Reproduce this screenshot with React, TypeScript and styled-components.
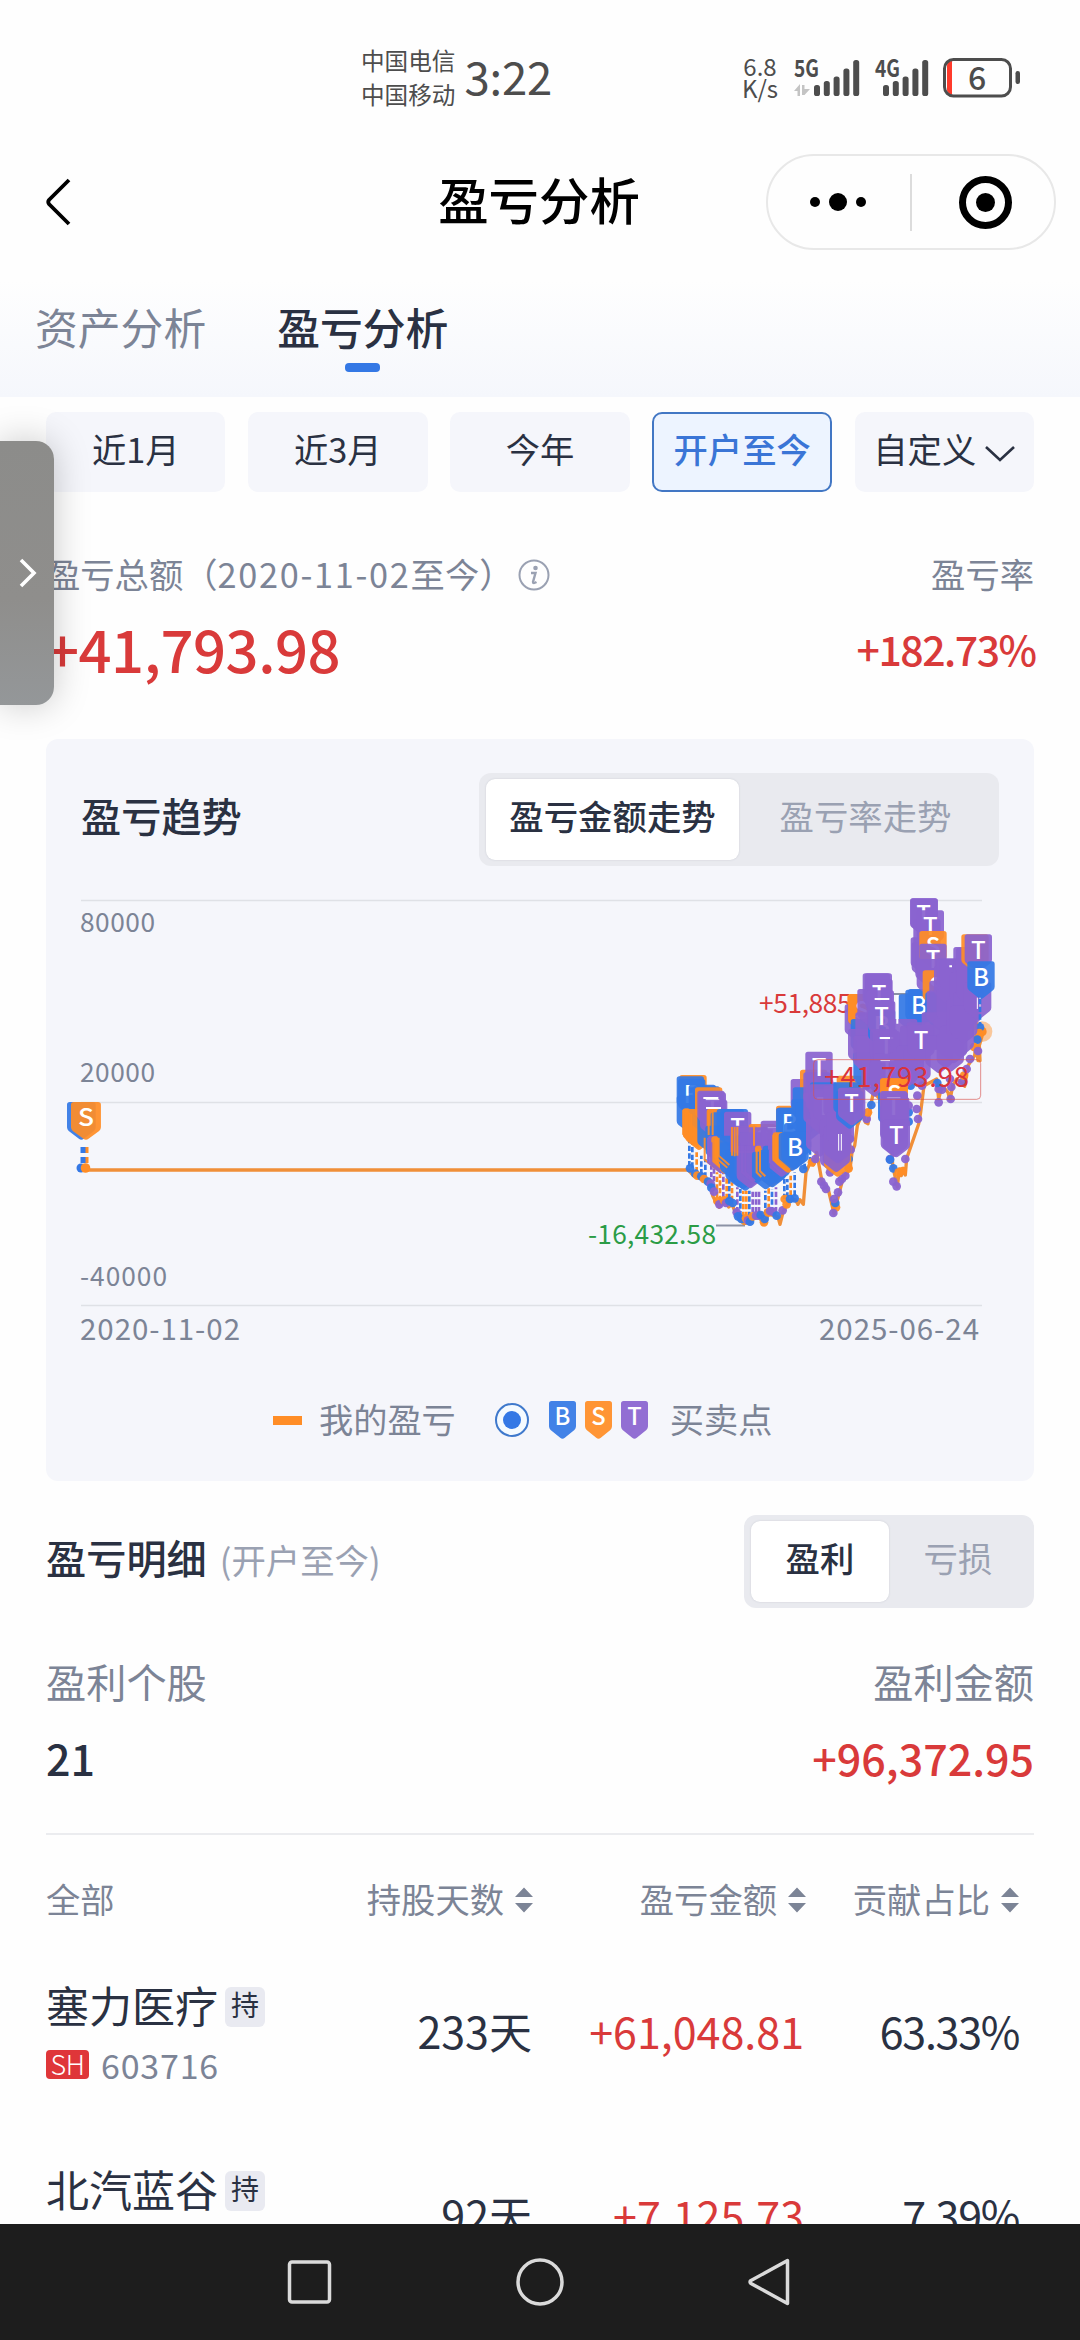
import React from 'react';
import styled, { createGlobalStyle } from 'styled-components';

const FONT = '"Noto Sans CJK SC", "Noto Sans", sans-serif';
const INK = '#2a3142';
const MUTED = '#7c8496';
const FAINT = '#9aa1b2';
const RED = '#d93a3a';
const BLUE = '#3478e5';
const ORANGE = '#ff8d26';
const PURPLE = '#8a63d0';

const Global = createGlobalStyle`
  html, body { margin: 0; padding: 0; background: #fefefe; }
  * { box-sizing: border-box; }
  body { font-family: ${FONT}; color: ${INK}; }
`;

const Screen = styled.div`
  position: relative;
  width: 1080px;
  height: 2340px;
  overflow: hidden;
  display: flex;
  flex-direction: column;
  background: #fefefe;
`;

/* ---------- status bar ---------- */
const StatusBar = styled.div`
  height: 140px;
  flex: none;
  display: flex;
  justify-content: space-between;
  padding: 43px 60px 0 361px;
  color: #4d4d4d;
`;
const StatusLeft = styled.div`
  display: flex;
  gap: 9px;
`;
const Carriers = styled.div`
  font-size: 23.6px;
  line-height: 34px;
  white-space: nowrap;
`;
const Clock = styled.div`
  font-size: 45.5px;
  line-height: 65px;
  letter-spacing: -0.2px;
`;
const StatusRight = styled.div`
  display: flex;
  align-items: flex-start;
  padding-top: 15px;
`;
const Speed = styled.div`
  width: 38px;
  margin-top: -3px;
  margin-right: 15px;
  font-size: 24px;
  line-height: 22px;
  text-align: center;
`;
const StatusIcon = styled.svg`
  overflow: visible;
`;

/* ---------- title bar ---------- */
const TitleBar = styled.div`
  height: 140px;
  flex: none;
  display: grid;
  grid-template-columns: 314px 1fr 314px;
  padding: 0 24px 16px 0;
  align-items: center;
`;
const BackCell = styled.div`
  padding-left: 44px;
  display: flex;
`;
const PageTitle = styled.h1`
  margin: -6px 0 0;
  padding-left: 22px;
  text-align: center;
  font-size: 50.4px;
  line-height: 60px;
  font-weight: 500;
  color: #000;
  white-space: nowrap;
`;
const Capsule = styled.div`
  width: 290px;
  height: 96px;
  justify-self: end;
  border: 2px solid #e8e8e8;
  border-radius: 48px;
  display: flex;
  align-items: center;
`;

/* ---------- tabs ---------- */
const Tabs = styled.div`
  height: 117px;
  flex: none;
  display: flex;
  gap: 71px;
  padding: 15px 35px 0;
  background: linear-gradient(#fefefe, #f5f7fc);
`;
const Tab = styled.div<{ $on?: boolean }>`
  display: flex;
  flex-direction: column;
  align-items: center;
  gap: 6px;
  font-size: 42.8px;
  line-height: 62px;
  font-weight: ${p => (p.$on ? 500 : 400)};
  color: ${p => (p.$on ? INK : MUTED)};
  &::after {
    content: '';
    width: 35px;
    height: 9px;
    border-radius: 4px;
    background: ${p => (p.$on ? BLUE : 'transparent')};
  }
`;

/* ---------- page body ---------- */
const Body = styled.main`
  flex: 1;
  min-height: 0;
  overflow: hidden;
  padding: 15px 46px 0;
`;
const Chips = styled.div`
  display: grid;
  grid-template-columns: repeat(5, 1fr);
  gap: 22.7px;
`;
const Chip = styled.div<{ $on?: boolean }>`
  height: 80px;
  border-radius: 10px;
  border: 2px solid ${p => (p.$on ? '#4277c4' : '#f5f6fb')};
  background: ${p => (p.$on ? '#edf4ff' : '#f5f6fb')};
  color: ${p => (p.$on ? '#3a75d6' : INK)};
  font-size: 34.3px;
  line-height: 69px;
  font-weight: ${p => (p.$on ? 500 : 400)};
  display: flex;
  justify-content: center;
  white-space: nowrap;
`;
const ChipArrow = styled.svg`
  margin: 31px 0 0 9px;
`;
const SpreadRow = styled.div<{ $h: number; $top?: number }>`
  height: ${p => p.$h}px;
  margin-top: ${p => p.$top ?? 0}px;
  display: flex;
  justify-content: space-between;
  align-items: center;
`;
const Label = styled.div<{ $size: number }>`
  display: flex;
  align-items: center;
  font-size: ${p => p.$size}px;
  color: ${MUTED};
  white-space: nowrap;
`;
const DateText = styled.span`
  letter-spacing: 1.7px;
`;
const InfoIcon = styled.svg`
  margin: 3px 0 0 4px;
`;
const Figure = styled.div<{ $size: number; $ls?: number; $ink?: boolean }>`
  font-size: ${p => p.$size}px;
  line-height: 1;
  letter-spacing: ${p => p.$ls ?? 0}px;
  margin-right: ${p => p.$ls ?? 0}px;
  font-weight: 500;
  color: ${p => (p.$ink ? INK : RED)};
`;

/* ---------- trend card ---------- */
const Card = styled.section`
  width: 988px;
  height: 742px;
  margin-top: 51px;
  padding-top: 34px;
  border-radius: 12px;
  background: #f5f6fb;
`;
const CardHead = styled.div`
  display: flex;
  justify-content: space-between;
  padding: 0 35px;
`;
const SectionTitle = styled.h2`
  margin: 0;
  font-size: 40.2px;
  line-height: 84px;
  font-weight: 500;
  white-space: nowrap;
`;
const Segmented = styled.div`
  display: flex;
  height: 93px;
  padding: 6px 7px;
  border-radius: 12px;
  background: #e9eaef;
`;
const Segment = styled.div<{ $on?: boolean; $w: number }>`
  width: ${p => p.$w}px;
  border-radius: 9px;
  text-align: center;
  font-size: 34.4px;
  line-height: 72px;
  font-weight: ${p => (p.$on ? 500 : 400)};
  color: ${p => (p.$on ? INK : FAINT)};
  background: ${p => (p.$on ? '#fff' : 'transparent')};
  box-shadow: ${p => (p.$on ? '0 0 2px #c8cad2' : 'none')};
`;
const Plot = styled.svg`
  display: block;
  margin-top: 23px;
  overflow: visible;
`;
const Legend = styled.div`
  height: 122px;
  padding-left: 227px;
  display: flex;
  align-items: center;
  font-size: 34.2px;
  color: ${MUTED};
`;
const LegendDash = styled.i`
  width: 29px;
  height: 9px;
  margin-right: 17px;
  background: ${ORANGE};
`;
const LegendText = styled.span<{ $left?: number }>`
  line-height: 44px;
  margin: 0 0 5px ${p => p.$left ?? 0}px;
`;
const Radio = styled.i`
  width: 34px;
  height: 34px;
  margin: 0 20px 0 39px;
  border-radius: 50%;
  border: 2px solid #3f79cc;
  background: #f4faff;
  display: grid;
  place-items: center;
  &::after {
    content: '';
    width: 18px;
    height: 18px;
    border-radius: 50%;
    background: ${BLUE};
  }
`;
const LegendBadge = styled.svg`
  margin-right: 9px;
`;

/* ---------- details ---------- */
const SubTitle = styled.span`
  margin-left: 13px;
  font-size: 34.4px;
  font-weight: 400;
  color: ${FAINT};
`;
const DetailHead = styled(SpreadRow)`
  align-items: flex-start;
`;
const Rule = styled.hr`
  height: 2px;
  margin: 0;
  border: 0;
  background: #ebecef;
`;
const TableRow = styled.div<{ $h: number; $top?: number }>`
  height: ${p => p.$h}px;
  padding-top: ${p => p.$top ?? 0}px;
  display: grid;
  grid-template-columns: 250px 237px 273px 213px;
  align-items: center;
`;
const HeadCell = styled.div<{ $right?: boolean }>`
  display: flex;
  align-items: center;
  justify-content: ${p => (p.$right ? 'flex-end' : 'flex-start')};
  gap: 11px;
  font-size: 34.3px;
  line-height: 44px;
  color: ${MUTED};
  white-space: nowrap;
`;
const SortIcon = styled.svg`
  margin-top: 5px;
`;
const StockCell = styled.div`
  display: flex;
  flex-direction: column;
  gap: 8px;
`;
const StockName = styled.div`
  display: flex;
  align-items: center;
  gap: 7px;
  font-size: 43px;
  line-height: 62px;
  white-space: nowrap;
`;
const HoldTag = styled.span`
  width: 40px;
  height: 40px;
  margin-top: 5px;
  border-radius: 6px;
  background: #e9eaf1;
  font-size: 28px;
  line-height: 35px;
  text-align: center;
`;
const StockCode = styled.div`
  display: flex;
  align-items: center;
  gap: 12px;
  font-size: 34px;
  line-height: 44px;
  letter-spacing: 0.8px;
  color: ${MUTED};
`;
const Market = styled.span`
  width: 43px;
  height: 29px;
  margin-bottom: 2px;
  border-radius: 4px;
  background: #df3639;
  color: #fff;
  font: 300 27px/28px ${FONT};
  letter-spacing: -0.5px;
  text-align: center;
`;
const Value = styled.div<{ $red?: boolean; $pad?: number; $ls?: number }>`
  padding-right: ${p => p.$pad ?? 0}px;
  text-align: right;
  font-size: 43px;
  line-height: 62px;
  letter-spacing: ${p => p.$ls ?? 0}px;
  color: ${p => (p.$red ? RED : INK)};
  white-space: nowrap;
`;

/* ---------- system chrome ---------- */
const SystemNav = styled.nav`
  height: 116px;
  flex: none;
  display: flex;
  justify-content: center;
  align-items: center;
  gap: 180px;
  background: #1d1d1d;
`;
const SideHandle = styled.div`
  position: absolute;
  left: 0;
  top: 441px;
  width: 54px;
  height: 264px;
  padding-left: 18px;
  border-radius: 0 18px 18px 0;
  background: linear-gradient(#8c8c8a, #8f8e8c 60%, #949799);
  box-shadow: 0 0 36px rgba(0, 0, 0, 0.22);
  display: flex;
  align-items: center;
`;

/* ---------- badges ---------- */
type Kind = 'B' | 'S' | 'T' | 'b' | 's' | 't';
const COLORS: Record<string, string> = { B: BLUE, S: ORANGE, T: PURPLE };
const colorOf = (k: Kind) => COLORS[k.toUpperCase()];

/* Upper case draws the letter, lower case leaves the badge blank. */
const Badge = ({ k, x, y }: { k: Kind; x: number; y: number }) => (
  <g transform={`translate(${x} ${y})`}>
    <path
      d="M8 0H74Q82 0 82 8V76Q82 82 77 87L48 110Q41 116 34 110L5 87Q0 82 0 76V8Q0 0 8 0Z"
      fill={colorOf(k)}
      fillOpacity={0.93}
    />
    {k === k.toUpperCase() && (
      <text x={41} y={73} fontSize={72} fontWeight={500} textAnchor="middle" fill="#fff">
        {k}
      </text>
    )}
  </g>
);

const EARLY_BADGES: [Kind, number, number][] = [
  ['s', 118, 588], ['b', 110, 592], ['B', 114, 600], ['b', 110, 650],
  ['s', 128, 688], ['s', 136, 700], ['b', 146, 617], ['b', 158, 622], ['b', 150, 650],
  ['s', 128, 690], ['b', 172, 710],
  ['s', 165, 625], ['t', 172, 635], ['T', 176, 640], ['t', 180, 662],
  ['s', 200, 690], ['b', 212, 700], ['b', 196, 740], ['t', 204, 770], ['s', 214, 772],
  ['s', 226, 775], ['b', 230, 690], ['b', 242, 690], ['T', 252, 698], ['b', 236, 770],
  ['b', 240, 790], ['b', 256, 812], ['t', 270, 740], ['b', 268, 818],
  ['b', 296, 760], ['S', 326, 735], ['t', 296, 745], ['t', 300, 760], ['t', 284, 800],
  ['b', 275, 822], ['t', 290, 815], ['s', 345, 800], ['s', 352, 810], ['T', 362, 725],
  ['t', 366, 745], ['b', 336, 818], ['b', 356, 812], ['b', 368, 800], ['s', 408, 680],
  ['b', 412, 686], ['B', 408, 686], ['t', 384, 780], ['s', 398, 760],
  ['s', 404, 768], ['s', 412, 762], ['b', 416, 762], ['t', 452, 600], ['s', 480, 572],
  ['b', 458, 625], ['b', 454, 660], ['b', 468, 670], ['b', 432, 732], ['B', 424, 758],
];

const LATE_BADGES: [Kind, number, number][] = [
  ['t', 490, 580], ['t', 498, 600], ['T', 496, 518], ['t', 490, 640], ['t', 498, 720],
  ['t', 512, 660], ['t', 540, 690], ['t', 520, 640], ['b', 510, 610], ['t', 506, 616],
  ['T', 510, 636], ['t', 520, 630], ['t', 540, 720], ['t', 540, 770], ['t', 550, 620], ['s', 590, 590],
  ['b', 580, 610], ['s', 552, 780], ['t', 548, 766], ['t', 552, 740], ['t', 560, 700],
  ['b', 588, 636], ['T', 594, 626],
  ['s', 622, 346], ['S', 626, 346], ['t', 614, 376], ['s', 624, 346], ['S', 626, 346], ['b', 632, 420], ['t', 624, 450],
  ['t', 646, 400], ['t', 652, 330], ['t', 668, 283], ['t', 674, 283], ['T', 676, 300],
  ['b', 640, 520], ['t', 640, 470], ['t', 650, 480], ['t', 664, 540], ['t', 680, 334],
  ['B', 684, 392], ['T', 684, 366], ['t', 690, 450], ['t', 700, 500], ['t', 690, 540],
  ['T', 698, 456], ['t', 702, 480], ['T', 700, 524], ['t', 690, 545],
  ['b', 776, 346], ['b', 804, 330], ['B', 796, 332], ['t', 750, 420], ['t', 780, 440],
  ['t', 800, 430], ['t', 770, 500], ['t', 750, 520], ['t', 790, 510],
  ['t', 812, 175], ['t', 812, 58], ['T', 810, 58], ['t', 820, 120], ['t', 815, 190],
  ['T', 830, 94], ['t', 826, 210], ['S', 838, 156], ['T', 838, 194], ['t', 830, 240],
  ['S', 848, 274], ['t', 868, 305], ['b', 856, 340], ['t', 860, 335], ['t', 845, 400],
  ['T', 802, 438], ['t', 882, 260], ['t', 890, 238], ['t', 900, 240], ['t', 890, 330],
  ['t', 880, 420], ['t', 856, 470], ['t', 900, 440], ['t', 940, 204], ['t', 948, 206],
  ['t', 930, 280], ['t', 920, 360], ['t', 940, 340], ['t', 920, 420], ['t', 890, 465],
  ['s', 964, 166], ['T', 974, 166], ['t', 950, 270], ['t', 930, 380], ['t', 972, 310],
  ['b', 714, 640], ['s', 720, 598], ['S', 722, 598], ['t', 722, 640], ['t', 720, 690],
  ['T', 720, 636], ['t', 726, 655], ['t', 722, 720], ['T', 728, 722], ['B', 982, 247],
];

/* Edges of older badges that still show between the newer ones on top. */
const EDGES: [Kind, string][] = [
  ['s', 'M130 692V765L165 798M142 692V770L176 806M154 704V775'],
  ['s', 'M206 692V768M218 692V768M194 776V842L236 876'],
  ['t', 'M204 776V850L244 882M214 790V850L240 872'],
  ['s', 'M226 776V835L262 866M236 776V830L268 858'],
  ['s', 'M276 744V830M284 744V832M292 744V830'],
  ['t', 'M306 790V880L340 910M316 800V880L345 906'],
  ['s', 'M350 806V880L364 894M342 740V800M360 812V876L376 892'],
  ['b', 'M386 812V870L408 890'],
  ['t', 'M390 812V850L425 882'],
  ['s', 'M400 768V842L440 876M410 764V838L450 872'],
];

const DOTS: [Kind, number, number][] = [
  ['b', 150, 868], ['b', 166, 884], ['s', 172, 890], ['b', 184, 892], ['s', 192, 900], ['b', 204, 908],
  ['t', 212, 914], ['b', 214, 926], ['t', 222, 938], ['s', 232, 966], ['t', 238, 976], ['s', 252, 964],
  ['t', 258, 972], ['b', 268, 966], ['b', 278, 972], ['t', 290, 1000], ['b', 294, 1012], ['b', 304, 1020],
  ['s', 318, 1018], ['t', 324, 1024], ['b', 330, 1028], ['s', 338, 1012], ['t', 348, 1010], ['t', 356, 1010],
  ['b', 362, 1008], ['s', 372, 1030], ['b', 374, 1020],
  ['s', 384, 1000], ['t', 390, 996], ['t', 398, 998], ['b', 410, 1010], ['t', 428, 994], ['s', 440, 976],
  ['s', 434, 960], ['b', 450, 960], ['b', 464, 958], ['b', 490, 870], ['s', 516, 850], ['t', 526, 840],
  ['t', 544, 908], ['t', 552, 920], ['t', 558, 930], ['t', 570, 880], ['t', 598, 908], ['t', 594, 940],
  ['s', 588, 985], ['b', 586, 972], ['t', 582, 960],
  ['t', 580, 1002], ['t', 606, 900], ['t', 616, 890], ['s', 626, 868], ['b', 626, 840], ['t', 632, 812],
  ['t', 630, 780], ['t', 680, 720], ['s', 684, 700], ['b', 694, 678], ['t', 750, 840], ['b', 750, 842], ['b', 760, 868],
  ['s', 776, 880], ['s', 788, 876], ['t', 796, 840], ['t', 760, 908], ['t', 770, 922], ['b', 806, 700],
  ['t', 806, 680], ['b', 806, 728], ['t', 834, 720], ['t', 830, 690], ['t', 846, 620], ['t', 832, 650],
  ['b', 812, 620], ['t', 896, 670], ['t', 932, 660], ['t', 906, 632], ['t', 896, 630], ['b', 892, 612],
  ['t', 934, 624], ['t', 930, 600], ['t', 966, 610], ['s', 972, 590], ['t', 980, 570], ['t', 990, 540],
  ['s', 1004, 440], ['b', 1020, 445], ['s', 1012, 478], ['s', 1018, 462],
  ['b', 1012, 482], ['s', 1002, 504], ['t', 1014, 516],
];

const LINE =
  'M-1665 873H145L160 890 185 898 200 912 212 918 218 950 226 966 238 985 246 970 254 962 266 984 276 976 286 1000 294 1018 312 1034 330 1030 345 1014 358 1014 370 1036 386 1006 404 1010 414 1014 420 1036 430 996 448 965 466 962 474 976 480 962 490 976 498 880 512 848 520 858 530 820 546 908 566 936 582 1004 598 940 610 895 620 882 630 872 636 820 644 800 652 740 668 700 676 730 684 734 690 690 700 640 750 690 758 860 772 924 778 870 784 890 790 868 796 888 800 838 836 735 842 700 852 620 890 600 896 660 906 620 924 640 930 664 938 620 950 600 966 612 974 622 984 560 1004 530 1008 490 1014 545 1020 545 1018 500 1030 458';

const DASHES: [Kind, number, number, number][] = [
  ['b', 148, 780, 862], ['b', 157, 790, 866], ['s', 170, 820, 880], ['b', 184, 830, 886], ['b', 196, 840, 896],
  ['t', 214, 860, 918], ['t', 222, 865, 930], ['s', 231, 880, 955], ['s', 240, 886, 966], ['t', 250, 880, 955],
  ['s', 260, 892, 960], ['b', 268, 900, 960], ['s', 276, 910, 966], ['t', 292, 925, 1000], ['b', 301, 930, 1012],
  ['s', 310, 935, 1014], ['s', 319, 935, 1014], ['b', 328, 935, 1014], ['t', 338, 935, 1000], ['t', 348, 935, 1000], ['t', 357, 935, 1000],
  ['b', 376, 935, 1010], ['s', 386, 925, 990], ['b', 396, 930, 1000], ['t', 408, 925, 1000],
  ['b', 433, 900, 960], ['b', 442, 900, 956], ['s', 452, 890, 950], ['b', 464, 880, 950], ['b', 494, 850, 870], ['b', 510, 760, 850],
];

const AXIS = { fontSize: 26.3, fill: MUTED };

const TrendPlot = () => (
  <Plot width={988} height={470} viewBox="46 890 988 470" fontFamily={FONT}>
    {[901, 1103, 1306].map(y => (
      <path key={y} d={`M81 ${y + 0.5}H982`} stroke="#dfe1e6" strokeWidth={1.6} />
    ))}
    <text x={80} y={933} {...AXIS} textLength={75}>80000</text>
    <text x={80} y={1083} {...AXIS} textLength={75}>20000</text>
    <text x={80} y={1287} {...AXIS} textLength={87}>-40000</text>
    <text x={80} y={1341} fontSize={29.5} fill={MUTED} textLength={160}>2020-11-02</text>
    <text x={819} y={1341} fontSize={29.5} fill={MUTED} textLength={160}>2025-06-24</text>
    <text x={588} y={1244.5} fontSize={26.3} fill="#2b9c46" textLength={128}>-16,432.58</text>
    <path d="M716 1226.5H745M893 995H912" stroke="#8b92a5" strokeWidth={2} />
    <text x={759} y={1014} fontSize={26.3} fill={RED} textLength={128}>+51,885.31</text>
    <g transform="translate(640 880) scale(.33333)">
      <path d={LINE} fill="none" stroke="#f08f38" strokeWidth={10} strokeLinejoin="round" />
      <circle cx={1026} cy={458} r={31} fill={ORANGE} fillOpacity={0.45} />
      <circle cx={1026} cy={458} r={14} fill={ORANGE} />
      {DASHES.map(([k, x, y1, y2], i) => (
        <path key={i} d={`M${x} ${y2}V${y1}`} stroke={colorOf(k)} strokeWidth={8} strokeDasharray="16 7" />
      ))}
      {DOTS.map(([k, x, y], i) => (
        <circle key={i} cx={x} cy={y} r={13} fill={colorOf(k)} fillOpacity={0.95} />
      ))}
      {EARLY_BADGES.slice(0, -1).map(([k, x, y], i) => <Badge key={i} k={k} x={x} y={y} />)}
      {EDGES.map(([k, d], i) => (
        <path key={i} d={d} fill="none" stroke={colorOf(k)} strokeWidth={6} strokeOpacity={0.9} />
      ))}
      <path d="M190 657H235M198 687H243" stroke="#fff" strokeWidth={6} />
      {EARLY_BADGES.slice(-1).map(([k, x, y], i) => <Badge key={i} k={k} x={x} y={y} />)}
      {LATE_BADGES.map(([k, x, y], i) => <Badge key={i} k={k} x={x} y={y} />)}
      <path d="M704 360H748M928 262H936M772 348V434" stroke="#fff" strokeWidth={6} />
      <path d="M1012 356V390M1020 356V390M596 765V815M604 765V815" stroke="#fff" strokeWidth={3} />
      <path d="M1020 360V440" stroke={BLUE} strokeWidth={8} strokeDasharray="16 7" />
      <rect x={521} y={542} width={501} height={119} rx={12} fill="none" stroke="#d9534f" strokeOpacity={0.65} strokeWidth={3} />
      <text x={553} y={625} fontSize={82} fill="#d9323c" textLength={434}>+41,793.98</text>
    </g>
    <path d="M82 1148V1169M85 1148V1169" stroke={BLUE} strokeWidth={3} strokeDasharray="6 4" />
    <path d="M87 1148V1169" stroke={ORANGE} strokeWidth={3} strokeDasharray="6 4" />
    <circle cx={81} cy={1169} r={4.5} fill={BLUE} />
    <circle cx={85.5} cy={1169} r={4.8} fill={ORANGE} />
    <g transform="translate(67 1103) scale(.35 .333)"><Badge k="b" x={0} y={0} /></g>
    <g transform="translate(71 1103) scale(.365 .333)"><Badge k="S" x={0} y={0} /></g>
  </Plot>
);

const BARS = [11, 15, 19.5, 27.5, 36];
const Signal = ({ label, x, w, data }: { label: string; x: number; w: number; data?: boolean }) => (
  <StatusIcon width={w} height={44} viewBox={`0 0 ${w} 44`}>
    <text x={0} y={19} fontSize={23.5} fontWeight={700} fill="#4d4d4d" fontFamily={FONT} textLength={25} lengthAdjust="spacingAndGlyphs">{label}</text>
    {BARS.map((h, i) => (
      <rect key={h} x={x + i * 9.8} y={38 - h} width={6} height={h} rx={2.6} fill="#4d4d4d" />
    ))}
    {data && <path d="M0 33L6 26V38H3.5V33ZM8 27H10.5V31H16L10.5 37H8Z" fill="#c4c4c4" />}
  </StatusIcon>
);

const Sort = () => (
  <SortIcon width={18} height={26} viewBox="0 0 18 26" fill={MUTED}>
    <path d="M9 .5L18 10H0ZM9 25.5L18 16H0Z" />
  </SortIcon>
);

const STOCKS = [
  { name: '塞力医疗', market: 'SH', code: '603716', days: '233天', gain: '+61,048.81', share: '63.33%' },
  { name: '北汽蓝谷', market: 'SH', code: '600733', days: '92天', gain: '+7,125.73', share: '7.39%' },
];

export default function App() {
  return (
    <Screen>
      <Global />
      <StatusBar>
        <StatusLeft>
          <Carriers>中国电信<br />中国移动</Carriers>
          <Clock>3:22</Clock>
        </StatusLeft>
        <StatusRight>
          <Speed>6.8<br />K/s</Speed>
          <Signal label="5G" x={20} w={81} data />
          <Signal label="4G" x={8} w={68} />
          <StatusIcon width={77} height={40} viewBox="0 0 77 40">
            <path d="M4 8Q4 3 9 3V37Q4 35 4 32Z" fill="#ff3a2b" />
            <rect x={1.5} y={1.5} width={66} height={36.5} rx={9} fill="none" stroke="#4d4d4d" strokeWidth={3} />
            <rect x={72.5} y={13} width={4.5} height={13} rx={2.2} fill="#4d4d4d" />
            <text x={34} y={31.5} fontSize={32} fill="#4d4d4d" fontFamily={FONT} textAnchor="middle" fontWeight={500}>6</text>
          </StatusIcon>
        </StatusRight>
      </StatusBar>

      <TitleBar>
        <BackCell>
          <svg width={28} height={50} viewBox="0 0 28 50" fill="none" stroke="#000" strokeWidth={3.8}>
            <path d="M25 3L5 23Q3.5 25 5 27L25 47" />
          </svg>
        </BackCell>
        <PageTitle>盈亏分析</PageTitle>
        <Capsule>
          <svg width={286} height={92} viewBox="768 156 286 92">
            <circle cx={815} cy={202} r={5} />
            <circle cx={838} cy={202} r={9} />
            <circle cx={861} cy={202} r={5} />
            <path d="M911 174V231" stroke="#dcdcdc" strokeWidth={2} />
            <circle cx={985.5} cy={202.5} r={23} fill="none" stroke="#000" strokeWidth={7} />
            <circle cx={985.5} cy={202.5} r={9.5} />
          </svg>
        </Capsule>
      </TitleBar>

      <Tabs>
        <Tab>资产分析</Tab>
        <Tab $on>盈亏分析</Tab>
      </Tabs>

      <Body>
        <Chips>
          <Chip>近1月</Chip>
          <Chip>近3月</Chip>
          <Chip>今年</Chip>
          <Chip $on>开户至今</Chip>
          <Chip>
            自定义
            <ChipArrow width={30} height={18} viewBox="0 0 30 18" fill="none" stroke={INK} strokeWidth={2.6}>
              <path d="M1 2L15 15L29 2" />
            </ChipArrow>
          </Chip>
        </Chips>

        <SpreadRow $h={50} $top={56}>
          <Label $size={34.3}>
            盈亏总额（<DateText>2020-11-02</DateText>至今）
            <InfoIcon width={32} height={32} viewBox="0 0 32 32" fill="none" stroke={FAINT} strokeWidth={2}>
              <circle cx={16} cy={16} r={14.5} />
              <path d="M13 14H17.5L15 23Q15 25 18.5 23" strokeWidth={2.4} />
              <circle cx={17.5} cy={9} r={1.3} fill={FAINT} />
            </InfoIcon>
          </Label>
          <Label $size={34.3}>盈亏率</Label>
        </SpreadRow>
        <SpreadRow $h={80} $top={10}>
          <Figure $size={58} $ls={-0.5}>+41,793.98</Figure>
          <Figure $size={41} $ls={-1.5}>+182.73%</Figure>
        </SpreadRow>

        <Card>
          <CardHead>
            <SectionTitle>盈亏趋势</SectionTitle>
            <Segmented>
              <Segment $on $w={253}>盈亏金额走势</Segment>
              <Segment $w={253}>盈亏率走势</Segment>
            </Segmented>
          </CardHead>
          <TrendPlot />
          <Legend>
            <LegendDash />
            <LegendText>我的盈亏</LegendText>
            <Radio />
            {(['B', 'S', 'T'] as Kind[]).map(k => (
              <LegendBadge key={k} width={27} height={38} viewBox="0 0 82 114" preserveAspectRatio="none" fontFamily={FONT}>
                <Badge k={k} x={0} y={0} />
              </LegendBadge>
            ))}
            <LegendText $left={13}>买卖点</LegendText>
          </Legend>
        </Card>

        <DetailHead $h={93} $top={34}>
          <SectionTitle>盈亏明细<SubTitle>(开户至今)</SubTitle></SectionTitle>
          <Segmented>
            <Segment $on $w={138}>盈利</Segment>
            <Segment $w={138}>亏损</Segment>
          </Segmented>
        </DetailHead>
        <SpreadRow $h={60} $top={42}>
          <Label $size={40.2}>盈利个股</Label>
          <Label $size={40.2}>盈利金额</Label>
        </SpreadRow>
        <SpreadRow $h={60} $top={17}>
          <Figure $size={43} $ink>21</Figure>
          <Figure $size={43}>+96,372.95</Figure>
        </SpreadRow>
        <SpreadRow $h={46} />
        <Rule />

        <TableRow $h={103} $top={22}>
          <HeadCell>全部</HeadCell>
          <HeadCell $right>持股天数<Sort /></HeadCell>
          <HeadCell $right>盈亏金额<Sort /></HeadCell>
          <HeadCell $right>贡献占比<Sort /></HeadCell>
        </TableRow>
        {STOCKS.map(s => (
          <TableRow key={s.name} $h={184}>
            <StockCell>
              <StockName>{s.name}<HoldTag>持</HoldTag></StockName>
              <StockCode><Market>{s.market}</Market>{s.code}</StockCode>
            </StockCell>
            <Value $pad={1}>{s.days}</Value>
            <Value $red $pad={2}>{s.gain}</Value>
            <Value $ls={-1.3}>{s.share}</Value>
          </TableRow>
        ))}
      </Body>

      <SystemNav>
        <svg width={50} height={50} viewBox="0 0 50 50" fill="none" stroke="#dadada" strokeWidth={3.5}>
          <rect x={4.5} y={5} width={40} height={40} rx={2.5} />
        </svg>
        <svg width={50} height={50} viewBox="0 0 50 50" fill="none" stroke="#dadada" strokeWidth={3.5}>
          <circle cx={25} cy={25} r={22} />
        </svg>
        <svg width={50} height={50} viewBox="0 0 50 50" fill="none" stroke="#dadada" strokeWidth={3.5} strokeLinejoin="round">
          <path d="M42.5 3.500V46.500L6 26.500Q4 25 6 23.500Z" />
        </svg>
      </SystemNav>

      <SideHandle>
        <svg width={20} height={32} viewBox="0 0 20 32" fill="none" stroke="#fff" strokeWidth={3.6}>
          <path d="M3 3L16 16L3 29" />
        </svg>
      </SideHandle>
    </Screen>
  );
}
